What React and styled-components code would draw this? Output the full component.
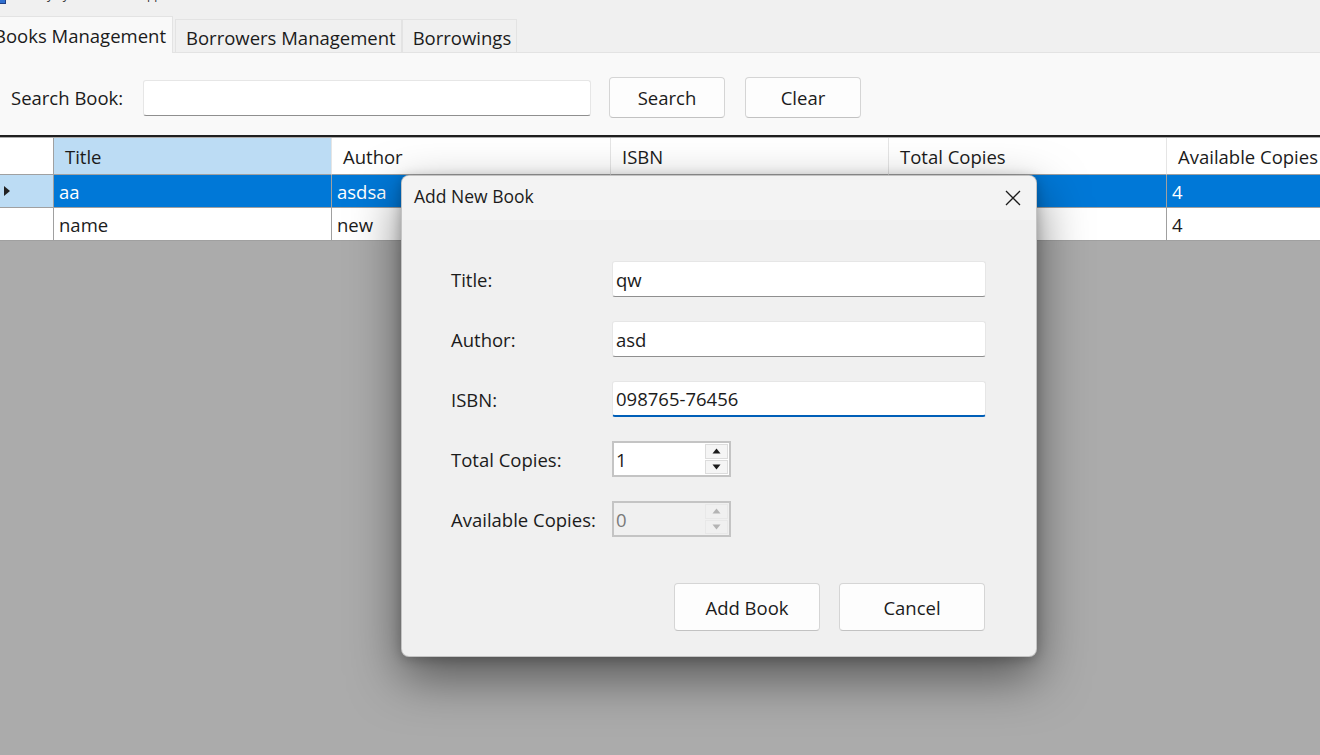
import React from 'react';
import styled, { createGlobalStyle } from 'styled-components';

const GlobalStyle = createGlobalStyle`
  html, body {
    margin: 0;
    padding: 0;
    background: #f0f0f0;
  }
  * { box-sizing: border-box; }
  body {
    font-family: "Open Sans", "Noto Sans", "Liberation Sans", sans-serif;
    color: #1b1b1b;
  }
`;

const Window = styled.div`
  width: 1320px;
  height: 755px;
  overflow: hidden;
  position: relative;
  display: flex;
  flex-direction: column;
  background: #f0f0f0;
`;

const TitleStrip = styled.div`
  height: 17px;
  overflow: hidden;
  display: flex;
  gap: 8px;
`;

const TitleText = styled.div`
  font-size: 12px;
  margin-top: -13px;
  line-height: 16px;
  color: #333;
  white-space: nowrap;
`;

const AppIcon = styled.div`
  width: 6px;
  height: 4px;
  background: #2f6fcf;
  border: 1px solid #1e3f86;
  border-left: none;
  border-top: none;
`;

const TabStrip = styled.div`
  display: flex;
  align-items: flex-end;
  height: 36px;
  margin-left: -21px;
  border-bottom: 1px solid #e3e3e3;
`;

const Tab = styled.div`
  height: ${p => (p.active ? '37px' : '33px')};
  margin-bottom: ${p => (p.active ? '-1px' : '0')};
  padding: ${p => (p.active ? '0 6px 0 14px' : '2px 5px 0 10px')};
  margin-right: ${p => (p.active ? '2px' : '0')};
  display: flex;
  align-items: center;
  font-size: 18.5px;
  background: ${p => (p.active ? '#f9f9f9' : '#f0f0f0')};
  border: 1px solid #e3e3e3;
  border-bottom: none;
  white-space: nowrap;
`;

const TabPanel = styled.div`
  flex: 1;
  display: flex;
  flex-direction: column;
  background: #f9f9f9;
`;

const SearchBar = styled.div`
  height: 82px;
  display: flex;
  align-items: center;
  padding-left: 11px;
  padding-top: 7px;
`;

const SearchLabel = styled.span`
  font-size: 18.5px;
  width: 132px;
  white-space: nowrap;
`;

const SearchInput = styled.div`
  width: 448px;
  height: 36px;
  background: #fff;
  border: 1px solid #e6e6e6;
  border-bottom: 1px solid #8f8f8f;
  border-radius: 3px;
  margin-right: 18px;
`;

const Button = styled.button`
  width: ${p => p.w || 116}px;
  height: ${p => p.h || 41}px;
  margin-right: ${p => p.gap || 0}px;
  background: #fdfdfd;
  border: 1px solid #d5d5d5;
  border-bottom-color: #c2c2c2;
  border-radius: 4px;
  font-family: inherit;
  font-size: 18.5px;
  color: #1b1b1b;
  padding: 0;
`;

const Grid = styled.div`
  flex: 1;
  background: #ababab;
  border-top: 2px solid #1f1f1f;
  padding-top: 1px;
  overflow: hidden;
`;

const GridRow = styled.div`
  display: grid;
  grid-template-columns: 54px 278px 279px 278px 278px 278px;
  height: ${p => (p.header ? 37 : 33)}px;
  background: ${p => (p.selected ? '#0078d7' : '#fff')};
  color: ${p => (p.selected ? '#fff' : '#1b1b1b')};
`;

const Cell = styled.div`
  display: flex;
  align-items: center;
  padding-left: ${p => (p.header ? 11 : 5)}px;
  font-size: 18.5px;
  border-right: 1px solid ${p => (p.header ? '#e5e5e5' : '#a0a0a0')};
  border-bottom: 1px solid #a0a0a0;
  background: ${p => (p.hl ? '#bcdcf4' : 'transparent')};
  white-space: nowrap;
  overflow: hidden;
`;

const RowHead = styled(Cell)`
  padding-left: 4px;
  background: ${p => (p.hl ? '#bcdcf4' : '#fff')};
  border-right-color: #a0a0a0;
`;

const Arrow = styled.span`
  width: 0;
  height: 0;
  border-top: 5px solid transparent;
  border-bottom: 5px solid transparent;
  border-left: 6px solid #222;
`;

const Dialog = styled.div`
  position: absolute;
  left: 401px;
  top: 175px;
  width: 636px;
  height: 482px;
  background: #f0f0f0;
  border-radius: 8px;
  border: 1px solid rgba(0, 0, 0, 0.18);
  box-shadow: 0 20px 50px rgba(0, 0, 0, 0.5), 0 2px 12px rgba(0, 0, 0, 0.22);
  display: flex;
  flex-direction: column;
  overflow: hidden;
`;

const DialogTitle = styled.div`
  height: 44px;
  background: #f3f3f3;
  display: flex;
  align-items: center;
  justify-content: space-between;
  padding: 0 15px 4px 12px;
  font-size: 17.5px;
`;

const CloseWrap = styled.span`
  display: flex;
  padding-top: 4px;
`;

const DialogBody = styled.div`
  flex: 1;
  display: flex;
  flex-direction: column;
  padding: 41px 51px 25px 49px;
`;

const Form = styled.div`
  display: grid;
  grid-template-columns: 161px 374px;
  row-gap: 24px;
  align-items: center;
`;

const Label = styled.span`
  font-size: 18.5px;
  white-space: nowrap;
`;

const TextBox = styled.div`
  height: 36px;
  background: #fff;
  border: 1px solid #e6e6e6;
  border-bottom: ${p => (p.focused ? '2px solid #005fb8' : '1px solid #8f8f8f')};
  border-radius: 3px;
  display: flex;
  align-items: center;
  padding-left: 3px;
  font-size: 18.5px;
`;

const Spin = styled.div`
  width: 119px;
  height: 36px;
  display: flex;
  border: 2px solid #c4c4c4;
  background: ${p => (p.disabled ? '#f0f0f0' : '#fff')};
  color: ${p => (p.disabled ? '#7a7a7a' : '#1b1b1b')};
  font-size: 18.5px;
`;

const SpinValue = styled.div`
  flex: 1;
  display: flex;
  align-items: center;
  padding-left: 2px;
`;

const SpinButtons = styled.div`
  width: 24px;
  display: flex;
  flex-direction: column;
  gap: 1px;
  padding: 1px 1px 1px 0;
`;

const SpinBtn = styled.div`
  flex: 1;
  display: flex;
  align-items: center;
  justify-content: center;
  background: ${p => (p.disabled ? '#f0f0f0' : '#f5f5f5')};
  border: 1px solid ${p => (p.disabled ? '#e8e8e8' : '#dcdcdc')};
`;

const Actions = styled.div`
  margin-top: auto;
  display: flex;
  justify-content: flex-end;
  gap: 19px;
`;

const Tri = ({ up, color }) => (
  <svg width="9" height="6" viewBox="0 0 9 6">
    <path d={up ? 'M0.5 5.5 L4.5 0.5 L8.5 5.5 Z' : 'M0.5 0.5 L4.5 5.5 L8.5 0.5 Z'} fill={color} />
  </svg>
);

const Spinner = ({ value, disabled }) => {
  const c = disabled ? '#b4b4b4' : '#1b1b1b';
  return (
    <Spin disabled={disabled}>
      <SpinValue>{value}</SpinValue>
      <SpinButtons>
        <SpinBtn disabled={disabled}><Tri up color={c} /></SpinBtn>
        <SpinBtn disabled={disabled}><Tri color={c} /></SpinBtn>
      </SpinButtons>
    </Spin>
  );
};

const CloseIcon = () => (
  <svg width="16" height="16" viewBox="0 0 16 16">
    <path d="M1 1 L15 15 M15 1 L1 15" stroke="#1b1b1b" strokeWidth="1.3" fill="none" />
  </svg>
);

const columns = ['Title', 'Author', 'ISBN', 'Total Copies', 'Available Copies'];
const books = [
  { title: 'aa', author: 'asdsa', isbn: '', total: '', available: '4', selected: true },
  { title: 'name', author: 'new', isbn: '', total: '', available: '4' },
];

export default function App() {
  return (
    <>
      <GlobalStyle />
      <Window>
        <TitleStrip>
          <AppIcon />
          <TitleText>Library System Admin App</TitleText>
        </TitleStrip>
        <TabStrip>
          <Tab active>Books Management</Tab>
          <Tab>Borrowers Management</Tab>
          <Tab>Borrowings</Tab>
        </TabStrip>
        <TabPanel>
          <SearchBar>
            <SearchLabel>Search Book:</SearchLabel>
            <SearchInput />
            <Button gap={20}>Search</Button>
            <Button>Clear</Button>
          </SearchBar>
          <Grid>
            <GridRow header>
              <RowHead header />
              {columns.map((c, i) => (
                <Cell header key={c} hl={i === 0}>{c}</Cell>
              ))}
            </GridRow>
            {books.map(b => (
              <GridRow key={b.title} selected={b.selected}>
                <RowHead hl={b.selected}>{b.selected && <Arrow />}</RowHead>
                <Cell>{b.title}</Cell>
                <Cell>{b.author}</Cell>
                <Cell>{b.isbn}</Cell>
                <Cell>{b.total}</Cell>
                <Cell>{b.available}</Cell>
              </GridRow>
            ))}
          </Grid>
        </TabPanel>

        <Dialog>
          <DialogTitle>
            <span>Add New Book</span>
            <CloseWrap><CloseIcon /></CloseWrap>
          </DialogTitle>
          <DialogBody>
            <Form>
              <Label>Title:</Label>
              <TextBox>qw</TextBox>
              <Label>Author:</Label>
              <TextBox>asd</TextBox>
              <Label>ISBN:</Label>
              <TextBox focused>098765-76456</TextBox>
              <Label>Total Copies:</Label>
              <Spinner value="1" />
              <Label>Available Copies:</Label>
              <Spinner value="0" disabled />
            </Form>
            <Actions>
              <Button w={146} h={48}>Add Book</Button>
              <Button w={146} h={48}>Cancel</Button>
            </Actions>
          </DialogBody>
        </Dialog>
      </Window>
    </>
  );
}
